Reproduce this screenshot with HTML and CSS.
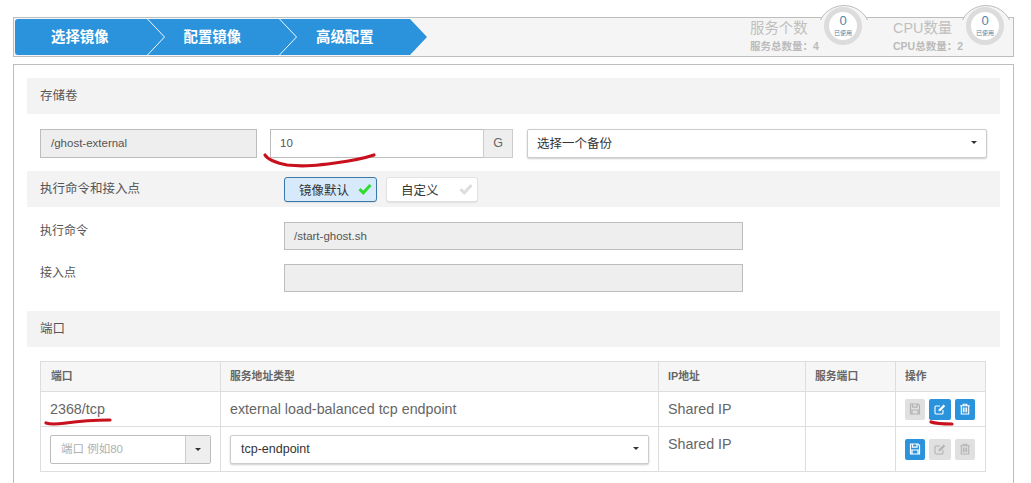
FILE: index.html
```html
<!DOCTYPE html>
<html lang="zh">
<head>
<meta charset="utf-8">
<title>高级配置</title>
<link rel="stylesheet" href="styles.css">
</head>
<body>
<svg width="0" height="0" class="defs">
  <symbol id="i-save" viewBox="0 0 12 12"><path d="M1.5 1h7.5l1.5 1.5v8.5h-9z M3.5 1v3.2h4.5V1 M3 11V7h6v4" fill="none" stroke="currentColor" stroke-width="1.2"/></symbol>
  <symbol id="i-edit" viewBox="0 0 12 12"><path d="M9 7v3a1 1 0 0 1-1 1H2a1 1 0 0 1-1-1V4a1 1 0 0 1 1-1h4" fill="none" stroke="currentColor" stroke-width="1.1"/><path d="M4.5 8.3l.4-2L9.6 1.6l1.6 1.6L6.5 7.9z" fill="currentColor"/></symbol>
  <symbol id="i-trash" viewBox="0 0 12 12"><path d="M1.2 2.8h9.6 M4.2 2.6V1.2h3.6v1.4 M2.3 2.8v8.2h7.4V2.8 M4.4 4.6v4.6 M6 4.6v4.6 M7.6 4.6v4.6" fill="none" stroke="currentColor" stroke-width="1.1"/></symbol>
  <symbol id="i-check" viewBox="0 0 14 12"><path d="M1.5 6.2l3.8 3.6L12.5 2" fill="none" stroke="currentColor" stroke-width="3"/></symbol>
</svg>

<header class="topbar">
  <ol class="steps">
    <li class="step">选择镜像<svg class="chev" viewBox="0 0 20 38"><path d="M1 0l18 19L1 38" fill="none" stroke="#fff" stroke-width="1"/></svg></li>
    <li class="step">配置镜像<svg class="chev" viewBox="0 0 20 38"><path d="M1 0l18 19L1 38" fill="none" stroke="#fff" stroke-width="1"/></svg></li>
    <li class="step step-last">高级配置</li>
  </ol>
  <div class="stats">
    <div class="stat stat-service">
      <div class="stat-text"><div class="stat-title">服务个数</div><div class="stat-sub">服务总数量：4</div></div>
      <div class="gauge"><span class="gauge-num">0</span><span class="gauge-label">已使用</span></div>
    </div>
    <div class="stat stat-cpu">
      <div class="stat-text"><div class="stat-title">CPU数量</div><div class="stat-sub">CPU总数量：2</div></div>
      <div class="gauge"><span class="gauge-num">0</span><span class="gauge-label">已使用</span></div>
    </div>
  </div>
</header>

<main class="panel">
  <h2 class="section">存储卷</h2>
  <div class="volume-row">
    <div class="field field-ro vol-path">/ghost-external</div>
    <div class="size-group">
      <div class="field size-input">10</div>
      <div class="addon">G</div>
    </div>
    <div class="select backup"><span>选择一个备份</span><i class="caret"></i></div>
  </div>

  <div class="section section-toggle">
    <h2 class="section-label">执行命令和接入点</h2>
    <div class="toggles">
      <button class="toggle toggle-on">镜像默认<svg class="check"><use href="#i-check"/></svg></button>
      <button class="toggle">自定义<svg class="check"><use href="#i-check"/></svg></button>
    </div>
  </div>

  <div class="form-row form-row-first">
    <label class="form-label">执行命令</label>
    <div class="field field-ro cmd">/start-ghost.sh</div>
  </div>
  <div class="form-row">
    <label class="form-label">接入点</label>
    <div class="field field-ro cmd"></div>
  </div>

  <h2 class="section section-port">端口</h2>

  <table class="ports">
    <thead>
      <tr><th class="c1">端口</th><th class="c2">服务地址类型</th><th class="c3">IP地址</th><th class="c4">服务端口</th><th class="c5">操作</th></tr>
    </thead>
    <tbody>
      <tr class="row-a">
        <td>2368/tcp</td>
        <td>external load-balanced tcp endpoint</td>
        <td>Shared IP</td>
        <td></td>
        <td><div class="ops">
          <span class="op op-off"><svg><use href="#i-save"/></svg></span>
          <span class="op op-on op-wide"><svg><use href="#i-edit"/></svg></span>
          <span class="op op-on"><svg><use href="#i-trash"/></svg></span>
        </div></td>
      </tr>
      <tr class="row-b">
        <td class="cell-ctl"><div class="port-combo"><span class="port-ph">端口 例如80</span><span class="port-btn"><i class="caret"></i></span></div></td>
        <td class="cell-ctl"><div class="select type-select"><span>tcp-endpoint</span><i class="caret"></i></div></td>
        <td class="cell-top">Shared IP</td>
        <td></td>
        <td class="cell-ops"><div class="ops">
          <span class="op op-on"><svg><use href="#i-save"/></svg></span>
          <span class="op op-off op-wide"><svg><use href="#i-edit"/></svg></span>
          <span class="op op-off"><svg><use href="#i-trash"/></svg></span>
        </div></td>
      </tr>
    </tbody>
  </table>
</main>

<svg class="marks" viewBox="0 0 1031 483" width="1031" height="483">
  <g fill="none" stroke="#c9111e" stroke-width="3.2" stroke-linecap="round">
    <path d="M265 155C268 160 277 163 287 165C305 167 320 165 335 163C350 161 362 159 374 155"/>
    <path d="M46 423C52 425 58 424 66 423C80 421 95 420 110 420"/>
    <path d="M931 422C937 424 945 424 952 424"/>
  </g>
</svg>
</body>
</html>
```

FILE: styles.css
```css
* { box-sizing: border-box; }
html, body { margin: 0; height: 483px; overflow: hidden; background: #fff; }
body {
  position: relative;
  padding: 17px 17px 0 13px;
  font-family: "Liberation Sans", "Noto Sans CJK SC", sans-serif;
  color: #666;
  font-size: 14px;
}
.defs { position: absolute; }

/* top bar */
.topbar {
  display: flex;
  justify-content: space-between;
  height: 40px;
  padding: 1px;
  border: 1px solid #bdbdbd;
  background: #f5f5f5;
}
.steps {
  display: flex;
  list-style: none;
  margin: 0;
  padding: 0;
  height: 36px;
  width: 412px;
  background: #2b93dc;
  border-radius: 3px 0 0 3px;
  clip-path: polygon(0 0, 395px 0, 412px 18px, 395px 36px, 0 36px);
}
.step {
  position: relative;
  width: 132.5px;
  padding-left: 36px;
  line-height: 36px;
  color: #fff;
  font-size: 14.4px;
  font-weight: 700;
}
.chev { position: absolute; right: -18px; top: 0; width: 20px; height: 36px; }

.stats { display: flex; height: 36px; }
.stat { display: flex; position: relative; z-index: 0; }
.stat-service { margin-right: 31px; }
.stat-text { width: 71px; margin-top: -1px; }
.stat-title { font-size: 14.4px; line-height: 20px; color: #bfbfbf; white-space: nowrap; }
.stat-sub { margin-top: 1px; font-size: 10.5px; line-height: 14px; font-weight: 700; color: #bbb; white-space: nowrap; }
.gauge {
  position: relative;
  flex: none;
  width: 38px;
  height: 38px;
  margin: -12px 0 0 3px;
  border: 5px solid #dcdcdc;
  border-radius: 50%;
  background: #fff;
  display: flex;
  flex-direction: column;
  align-items: center;
  color: #4d86a8;
}
.stat-cpu .gauge { margin: -12px 8px 0 2px; }
.gauge::before {
  content: "";
  position: absolute;
  left: -12px;
  top: -7px;
  width: 52px;
  height: 52px;
  border: 1px solid #bdbdbd;
  border-radius: 50%;
  background: #f5f5f5;
  clip-path: inset(0 0 39px 0);
  z-index: -1;
}
.gauge-num { font-size: 13px; line-height: 15px; margin-top: 1px; }
.gauge-label { font-size: 6px; line-height: 8px; margin-top: 1px; white-space: nowrap; }

/* panel */
.panel {
  margin-top: 7px;
  height: 419px;
  padding: 13px;
  border: 1px solid #bdbdbd;
  border-bottom: 0;
  background: #fff;
}
.section {
  margin: 0;
  height: 36px;
  padding-left: 13px;
  line-height: 36px;
  background: #f3f3f3;
  font-size: 12.5px;
  font-weight: 400;
  color: #555;
}
.volume-row {
  display: flex;
  margin: 15px 13px 13px;
  height: 29px;
}
.field {
  height: 29px;
  padding-left: 10px;
  line-height: 27px;
  border: 1px solid #bdbdbd;
  font-size: 11.5px;
  color: #555;
  background: #fff;
}
.field-ro { background: #eee; }
.vol-path { width: 217px; }
.size-group { display: flex; margin-left: 13px; }
.size-input { width: 213px; padding-left: 9px; border-right: 0; }
.addon {
  width: 30px;
  height: 29px;
  line-height: 27px;
  text-align: center;
  border: 1px solid #ccc;
  background: #eee;
  font-size: 12.5px;
  color: #666;
}
.select {
  display: flex;
  align-items: center;
  justify-content: space-between;
  height: 29px;
  padding: 0 9px 2px 9px;
  border: 1px solid #ccc;
  border-radius: 2px;
  background: #fff;
  box-shadow: 0 1px 2px rgba(0,0,0,.2);
  color: #333;
  font-size: 12.5px;
}
.backup { margin-left: 14px; flex: 1; }
.caret {
  display: block;
  border-top: 3.5px solid #333;
  border-left: 3px solid transparent;
  border-right: 3px solid transparent;
}
.section-toggle { display: flex; align-items: center; justify-content: flex-start; }
.section-label { margin: 0; width: 244px; font-size: 12.5px; font-weight: 400; color: #555; }
.toggles { display: flex; gap: 9px; }
.toggle {
  display: flex;
  align-items: center;
  justify-content: space-between;
  width: 92px;
  height: 25px;
  padding: 0 4px 0 14px;
  border: 1px solid #e2e2e2;
  border-radius: 3px;
  background: #fff;
  box-shadow: 0 1px 1px rgba(0,0,0,.08);
  font-family: inherit;
  font-size: 12.5px;
  color: #333;
}
.toggle-on { width: 93px; border-color: #3a78a8; background: #d7eafb; }
.check { width: 14px; height: 12px; color: #ddd; }
.toggle-on .check { color: #2fdc2f; }
.form-row { display: flex; margin: 14px 13px 0; height: 28px; }
.form-row-first { margin-top: 15px; }
.form-label { width: 244px; font-size: 12px; color: #555; line-height: 19px; }
.cmd { width: 459px; height: 28px; padding-left: 9px; }
.section-port { margin-top: 19px; }

/* table */
.ports {
  margin: 14px 13px 0;
  width: 945px;
  height: 110px;
  border-collapse: collapse;
  table-layout: fixed;
}
.ports th, .ports td { border: 1px solid #ddd; padding: 0 9px; text-align: left; }
.ports th {
  height: 30px;
  padding-bottom: 4px;
  background: #f6f6f6;
  font-size: 10.8px;
  font-weight: 700;
  color: #666;
}
.ports .c1 { padding-left: 10px; }
.ports td { color: #666; font-size: 14.3px; }
.c1 { width: 180px; }
.c2 { width: 438px; }
.c3 { width: 147px; }
.c4 { width: 90px; }
.c5 { width: 90px; }
.row-a td { height: 35px; }
.row-b td { height: 45px; }
.ports .cell-top { vertical-align: top; padding-top: 9px; }
.port-combo {
  display: flex;
  width: 161px;
  height: 29px;
  border: 1px solid #bdbdbd;
  border-radius: 2px;
}
.port-ph { flex: 1; padding-left: 10px; line-height: 27px; font-size: 11.5px; color: #b0b0b0; }
.port-btn {
  width: 25px;
  display: flex;
  align-items: center;
  justify-content: center;
  background: #eee;
  border-left: 1px solid #ccc;
}
.type-select { width: 419px; padding-left: 10px; padding-bottom: 1px; font-size: 12.5px; }
.ops { display: flex; gap: 4px; }
.op {
  display: flex;
  align-items: center;
  justify-content: center;
  width: 20px;
  height: 21px;
  border-radius: 2px;
}
.op-wide { width: 22px; }
.op svg { width: 12px; height: 12px; }
.op-on { background: #2b93dc; color: #fff; }
.op-off { background: #e0e0e0; color: #b4b4b4; }

.marks { position: absolute; left: 0; top: 0; pointer-events: none; }
```
